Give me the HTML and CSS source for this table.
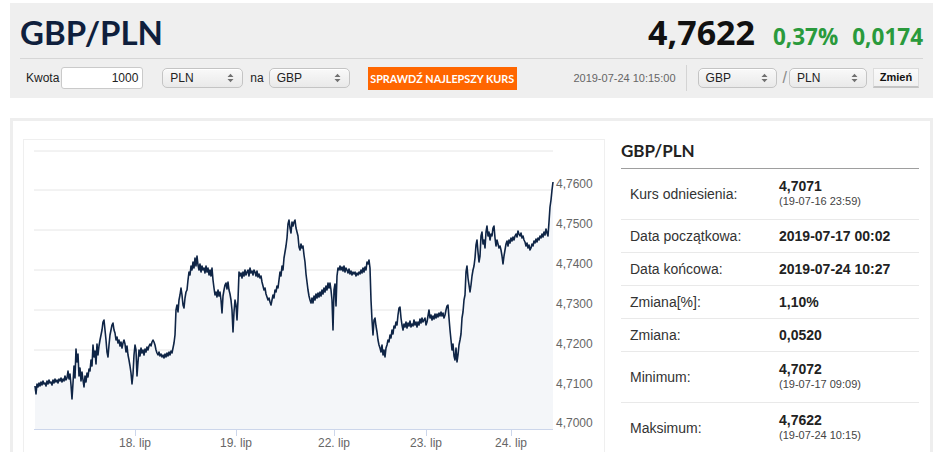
FILE: index.html
```html
<!DOCTYPE html>
<html lang="pl">
<head>
<meta charset="utf-8">
<title>GBP/PLN</title>
<link rel="stylesheet" href="styles.css">
</head>
<body>
<div class="header">
  <div class="title-row">
    <h1 class="pair">GBP/PLN</h1>
    <div class="quote">
      <span class="price">4,7622</span>
      <span class="chg">0,37%</span>
      <span class="chg">0,0174</span>
    </div>
  </div>
  <div class="toolbar">
    <span class="lbl kwota">Kwota</span>
    <div class="input">1000</div>
    <div class="select sel-a"><span>PLN</span><svg class="arr" width="7" height="10" viewBox="0 0 7 10"><path d="M0.5 4 L3.5 0.8 L6.5 4 Z M0.5 6 L3.5 9.2 L6.5 6 Z"/></svg></div>
    <span class="lbl na">na</span>
    <div class="select sel-a"><span>GBP</span><svg class="arr" width="7" height="10" viewBox="0 0 7 10"><path d="M0.5 4 L3.5 0.8 L6.5 4 Z M0.5 6 L3.5 9.2 L6.5 6 Z"/></svg></div>
    <div class="btn-orange">SPRAWDŹ NAJLEPSZY KURS</div>
    <span class="time">2019-07-24 10:15:00</span>
    <span class="vsep"></span>
    <div class="select sel-b"><span>GBP</span><svg class="arr" width="7" height="10" viewBox="0 0 7 10"><path d="M0.5 4 L3.5 0.8 L6.5 4 Z M0.5 6 L3.5 9.2 L6.5 6 Z"/></svg></div>
    <span class="slash">/</span>
    <div class="select sel-c"><span>PLN</span><svg class="arr" width="7" height="10" viewBox="0 0 7 10"><path d="M0.5 4 L3.5 0.8 L6.5 4 Z M0.5 6 L3.5 9.2 L6.5 6 Z"/></svg></div>
    <div class="btn-zmien">Zmień</div>
  </div>
</div>

<div class="card">
  <div class="chart-box">
    <svg class="chart" width="580" height="320" viewBox="24 140 580 320">
      <g class="grid">
        <line x1="34" y1="151" x2="553" y2="151"/>
        <line x1="34" y1="190" x2="553" y2="190"/>
        <line x1="34" y1="230" x2="553" y2="230"/>
        <line x1="34" y1="270" x2="553" y2="270"/>
        <line x1="34" y1="310" x2="553" y2="310"/>
        <line x1="34" y1="350" x2="553" y2="350"/>
        <line x1="34" y1="390" x2="553" y2="390"/>
      </g>
      <path class="area" d="M35,429 L35,386 36,394 37,384 38,387 39,383 40,386 41,382 42,385 43,381 44,384 45,383 46,386 47,381 48,384 49,380 50,383 51,382 52,385 53,380 54,383 55,379 56,382 57,380 58,383 59,379 60,381 61,378 62,382 63,379 64,381 65,376 66,380 67,378 68,371 69,379 70,374 71,385 72,399 73,383 74,366 75,378 76,349 77,362 78,354 79,376 80,368 81,381 82,372 83,380 84,387 85,376 86,382 87,373 88,377 89,369 90,371 91,360 92,366 93,345 94,357 95,351 96,364 97,344 98,355 99,346 100,340 101,335 102,330 103,322 104,320 105,330 106,340 107,352 108,357 109,345 110,335 111,330 112,325 113,323 114,330 115,333 116,340 117,337 118,343 119,340 120,346 121,342 122,348 123,343 124,340 125,344 126,352 127,346 128,355 129,360 130,366 131,373 132,384 133,374 134,355 135,345 136,350 137,376 138,362 139,350 140,356 141,348 142,353 143,350 144,355 145,349 146,352 147,347 148,350 149,346 150,344 151,346 152,342 153,340 154,342 155,345 156,350 157,353 158,355 159,352 160,356 161,354 162,357 163,355 164,358 165,354 166,357 167,353 168,356 169,352 170,355 171,351 172,353 173,348 174,343 175,335 176,310 177,305 178,312 179,300 180,295 181,288 182,295 183,305 184,308 185,298 186,292 187,290 188,280 189,272 190,275 191,266 192,270 193,262 194,268 195,258 196,266 197,256 198,265 199,270 200,264 201,272 202,266 203,270 204,268 205,273 206,266 207,272 208,268 209,275 210,270 211,276 212,268 213,280 214,288 215,295 216,292 217,297 218,290 219,296 220,292 221,300 222,313 223,296 224,290 225,285 226,283 227,289 228,282 229,290 230,294 231,300 232,310 233,332 234,312 235,300 236,305 237,320 238,300 239,272 240,276 241,273 242,278 243,272 244,276 245,270 246,275 247,272 248,270 249,276 250,268 251,273 252,271 253,275 254,270 255,272 256,276 257,271 258,277 259,274 260,278 261,276 262,282 263,286 264,290 265,288 266,294 267,297 268,300 269,298 270,302 271,305 272,300 273,295 274,298 275,290 276,292 277,286 278,288 279,280 280,272 281,276 282,266 283,270 284,258 285,252 286,246 287,238 288,224 289,220 290,228 291,233 292,222 293,226 294,222 295,220 296,228 297,232 298,236 299,247 300,250 301,244 302,248 303,246 304,255 305,262 306,274 307,282 308,290 309,296 310,300 311,303 312,298 313,303 314,296 315,300 316,294 317,298 318,293 319,297 320,292 321,296 322,290 323,294 324,288 325,292 326,286 327,290 328,283 329,288 330,283 331,290 332,300 333,330 334,290 335,284 336,306 337,276 338,268 339,270 340,266 341,270 342,267 343,271 344,266 345,272 346,268 347,270 348,273 349,269 350,274 351,271 352,275 353,272 354,274 355,272 356,276 357,273 358,275 359,272 360,274 361,270 362,273 363,268 364,272 365,267 366,270 367,262 368,264 369,260 370,268 371,300 372,320 373,335 374,320 375,318 376,326 377,332 378,340 379,345 380,348 381,352 382,345 383,355 384,350 385,357 386,348 387,345 388,340 389,342 390,335 391,338 392,330 393,334 394,326 395,328 396,322 397,325 398,315 399,308 400,307 401,318 402,325 403,330 404,324 405,327 406,322 407,328 408,323 409,326 410,321 411,327 412,324 413,326 414,320 415,325 416,322 417,327 418,322 419,325 420,319 421,323 422,318 423,322 424,320 425,318 426,325 427,322 428,316 429,310 430,318 431,315 432,320 433,316 434,319 435,314 436,318 437,314 438,317 439,313 440,316 441,312 442,316 443,313 444,318 445,315 446,310 447,306 448,305 449,318 450,330 451,340 452,350 453,344 454,356 455,360 456,348 457,362 458,355 459,345 460,340 461,334 462,318 463,312 464,300 465,295 466,272 467,266 468,278 469,285 470,292 471,285 472,276 473,270 474,266 475,258 476,245 477,240 478,252 479,262 480,256 481,236 482,232 483,244 484,240 485,248 486,232 487,226 488,236 489,232 490,240 491,234 492,236 493,228 494,226 495,238 496,246 497,240 498,244 499,248 500,246 501,250 502,256 503,264 504,256 505,250 506,244 507,241 508,246 509,240 510,243 511,238 512,241 513,237 514,240 515,236 516,234 517,237 518,231 519,234 520,236 521,233 522,238 523,236 524,240 525,242 526,246 527,243 528,248 529,245 530,250 531,248 532,244 533,246 534,241 535,243 536,239 537,242 538,238 539,240 540,236 541,238 542,234 543,237 544,232 545,235 546,229 547,233 548,236 549,222 550,207 551,200 552,190 553,182 L553,429 Z"/>
      <path class="line" d="M35,386 L36,394 37,384 38,387 39,383 40,386 41,382 42,385 43,381 44,384 45,383 46,386 47,381 48,384 49,380 50,383 51,382 52,385 53,380 54,383 55,379 56,382 57,380 58,383 59,379 60,381 61,378 62,382 63,379 64,381 65,376 66,380 67,378 68,371 69,379 70,374 71,385 72,399 73,383 74,366 75,378 76,349 77,362 78,354 79,376 80,368 81,381 82,372 83,380 84,387 85,376 86,382 87,373 88,377 89,369 90,371 91,360 92,366 93,345 94,357 95,351 96,364 97,344 98,355 99,346 100,340 101,335 102,330 103,322 104,320 105,330 106,340 107,352 108,357 109,345 110,335 111,330 112,325 113,323 114,330 115,333 116,340 117,337 118,343 119,340 120,346 121,342 122,348 123,343 124,340 125,344 126,352 127,346 128,355 129,360 130,366 131,373 132,384 133,374 134,355 135,345 136,350 137,376 138,362 139,350 140,356 141,348 142,353 143,350 144,355 145,349 146,352 147,347 148,350 149,346 150,344 151,346 152,342 153,340 154,342 155,345 156,350 157,353 158,355 159,352 160,356 161,354 162,357 163,355 164,358 165,354 166,357 167,353 168,356 169,352 170,355 171,351 172,353 173,348 174,343 175,335 176,310 177,305 178,312 179,300 180,295 181,288 182,295 183,305 184,308 185,298 186,292 187,290 188,280 189,272 190,275 191,266 192,270 193,262 194,268 195,258 196,266 197,256 198,265 199,270 200,264 201,272 202,266 203,270 204,268 205,273 206,266 207,272 208,268 209,275 210,270 211,276 212,268 213,280 214,288 215,295 216,292 217,297 218,290 219,296 220,292 221,300 222,313 223,296 224,290 225,285 226,283 227,289 228,282 229,290 230,294 231,300 232,310 233,332 234,312 235,300 236,305 237,320 238,300 239,272 240,276 241,273 242,278 243,272 244,276 245,270 246,275 247,272 248,270 249,276 250,268 251,273 252,271 253,275 254,270 255,272 256,276 257,271 258,277 259,274 260,278 261,276 262,282 263,286 264,290 265,288 266,294 267,297 268,300 269,298 270,302 271,305 272,300 273,295 274,298 275,290 276,292 277,286 278,288 279,280 280,272 281,276 282,266 283,270 284,258 285,252 286,246 287,238 288,224 289,220 290,228 291,233 292,222 293,226 294,222 295,220 296,228 297,232 298,236 299,247 300,250 301,244 302,248 303,246 304,255 305,262 306,274 307,282 308,290 309,296 310,300 311,303 312,298 313,303 314,296 315,300 316,294 317,298 318,293 319,297 320,292 321,296 322,290 323,294 324,288 325,292 326,286 327,290 328,283 329,288 330,283 331,290 332,300 333,330 334,290 335,284 336,306 337,276 338,268 339,270 340,266 341,270 342,267 343,271 344,266 345,272 346,268 347,270 348,273 349,269 350,274 351,271 352,275 353,272 354,274 355,272 356,276 357,273 358,275 359,272 360,274 361,270 362,273 363,268 364,272 365,267 366,270 367,262 368,264 369,260 370,268 371,300 372,320 373,335 374,320 375,318 376,326 377,332 378,340 379,345 380,348 381,352 382,345 383,355 384,350 385,357 386,348 387,345 388,340 389,342 390,335 391,338 392,330 393,334 394,326 395,328 396,322 397,325 398,315 399,308 400,307 401,318 402,325 403,330 404,324 405,327 406,322 407,328 408,323 409,326 410,321 411,327 412,324 413,326 414,320 415,325 416,322 417,327 418,322 419,325 420,319 421,323 422,318 423,322 424,320 425,318 426,325 427,322 428,316 429,310 430,318 431,315 432,320 433,316 434,319 435,314 436,318 437,314 438,317 439,313 440,316 441,312 442,316 443,313 444,318 445,315 446,310 447,306 448,305 449,318 450,330 451,340 452,350 453,344 454,356 455,360 456,348 457,362 458,355 459,345 460,340 461,334 462,318 463,312 464,300 465,295 466,272 467,266 468,278 469,285 470,292 471,285 472,276 473,270 474,266 475,258 476,245 477,240 478,252 479,262 480,256 481,236 482,232 483,244 484,240 485,248 486,232 487,226 488,236 489,232 490,240 491,234 492,236 493,228 494,226 495,238 496,246 497,240 498,244 499,248 500,246 501,250 502,256 503,264 504,256 505,250 506,244 507,241 508,246 509,240 510,243 511,238 512,241 513,237 514,240 515,236 516,234 517,237 518,231 519,234 520,236 521,233 522,238 523,236 524,240 525,242 526,246 527,243 528,248 529,245 530,250 531,248 532,244 533,246 534,241 535,243 536,239 537,242 538,238 539,240 540,236 541,238 542,234 543,237 544,232 545,235 546,229 547,233 548,236 549,222 550,207 551,200 552,190 553,182"/>
      <line class="axis" x1="34" y1="429.5" x2="553" y2="429.5"/>
      <g class="ticks">
        <line x1="135.5" y1="430" x2="135.5" y2="436"/>
        <line x1="236.5" y1="430" x2="236.5" y2="436"/>
        <line x1="334.5" y1="430" x2="334.5" y2="436"/>
        <line x1="426.5" y1="430" x2="426.5" y2="436"/>
        <line x1="511.5" y1="430" x2="511.5" y2="436"/>
      </g>
      <g class="ylabels">
        <text x="556" y="188">4,7600</text>
        <text x="556" y="228">4,7500</text>
        <text x="556" y="268">4,7400</text>
        <text x="556" y="308">4,7300</text>
        <text x="556" y="348">4,7200</text>
        <text x="556" y="388">4,7100</text>
        <text x="556" y="427">4,7000</text>
      </g>
      <g class="xlabels">
        <text x="135" y="447">18. lip</text>
        <text x="236" y="447">19. lip</text>
        <text x="334" y="447">22. lip</text>
        <text x="426" y="447">23. lip</text>
        <text x="511" y="447">24. lip</text>
      </g>
    </svg>
  </div>

  <div class="info">
    <h2 class="info-title">GBP/PLN</h2>
    <table class="stats">
      <tr class="dbl"><td class="k">Kurs odniesienia:</td><td class="v"><b>4,7071</b><small>(19-07-16 23:59)</small></td></tr>
      <tr><td class="k">Data początkowa:</td><td class="v"><b>2019-07-17 00:02</b></td></tr>
      <tr><td class="k">Data końcowa:</td><td class="v"><b>2019-07-24 10:27</b></td></tr>
      <tr><td class="k">Zmiana[%]:</td><td class="v"><b>1,10%</b></td></tr>
      <tr><td class="k">Zmiana:</td><td class="v"><b>0,0520</b></td></tr>
      <tr class="dbl"><td class="k">Minimum:</td><td class="v"><b>4,7072</b><small>(19-07-17 09:09)</small></td></tr>
      <tr class="dbl"><td class="k">Maksimum:</td><td class="v"><b>4,7622</b><small>(19-07-24 10:15)</small></td></tr>
    </table>
  </div>
</div>
</body>
</html>
```

FILE: styles.css
```css
* { box-sizing: border-box; }
html, body { margin: 0; padding: 0; background: #fff; }
body {
  font-family: "Liberation Sans", Arial, sans-serif;
  color: #222;
  overflow: hidden;
}

/* ---------- header ---------- */
.header {
  margin: 3px 0 0 10px;
  width: 923px;
  height: 95px;
  background: #efefef;
  padding: 0 10px;
}
.title-row {
  display: flex;
  justify-content: space-between;
  align-items: baseline;
  height: 56px;
  padding-top: 9px;
  border-bottom: 1px solid #d6d6d6;
}
.pair {
  margin: 0;
  font-family: Lato, "Open Sans", sans-serif;
  font-weight: 700;
  font-size: 33px;
  line-height: 40px;
  color: #0f1f3d;
}
.quote {
  display: flex;
  align-items: baseline;
}
.price {
  font-family: "Open Sans", sans-serif;
  font-weight: 700;
  font-size: 34px;
  line-height: 40px;
  color: #111;
  margin-right: 18px;
}
.chg {
  font-family: "Open Sans", sans-serif;
  font-weight: 700;
  font-size: 22.5px;
  color: #2a9a3c;
}
.chg + .chg { margin-left: 14px; }

.toolbar {
  display: flex;
  align-items: center;
  height: 38px;
  font-size: 12px;
}
.lbl { color: #222; font-size: 12px; }
.kwota { margin-left: 6px; }
.input {
  margin-left: 2px;
  width: 82px;
  height: 22px;
  background: #fff;
  border: 1px solid #cacaca;
  border-radius: 3px;
  text-align: right;
  padding-right: 4px;
  line-height: 20px;
  color: #222;
}
.select {
  display: flex;
  align-items: center;
  justify-content: space-between;
  height: 20px;
  padding: 0 8px 0 7px;
  border: 1px solid #c4c4c4;
  border-radius: 5px;
  background: linear-gradient(#f9f9f9, #e9e9e9);
  box-shadow: inset 0 1px 0 #fff;
  color: #222;
  font-size: 12px;
}
.arr { fill: #707070; display: block; }
.sel-a { width: 81px; }
.input + .sel-a { margin-left: 19px; }
.na { margin: 0 5px 0 7px; }
.btn-orange {
  margin-left: 18px;
  width: 149px;
  height: 23px;
  background: #ff6600;
  color: #fff;
  font-family: Lato, "Open Sans", sans-serif;
  font-weight: 700;
  font-size: 10.8px;
  line-height: 23px;
  text-align: center;
  white-space: nowrap;
}
.time {
  margin-left: auto;
  font-size: 11px;
  color: #666;
}
.vsep {
  width: 1px;
  height: 26px;
  background: #d4d4d4;
  margin: 0 11px 0 10px;
}
.sel-b { width: 79px; }
.sel-c { width: 78px; }
.slash {
  font-size: 16px;
  color: #8a8a8a;
  margin: 0 2px 0 6px;
}
.btn-zmien {
  margin: 0 4px 0 6px;
  width: 46px;
  height: 20px;
  background: linear-gradient(#fafafa, #f0f0f0);
  border: 1px solid #dcdcdc;
  border-bottom: 2px solid #c4c4c4;
  font-size: 11px;
  font-weight: 700;
  color: #111;
  text-align: center;
  line-height: 17px;
}

/* ---------- card ---------- */
.card {
  margin: 20px 0 0 10px;
  width: 923px;
  height: 400px;
  border: 3px solid #eeeeee;
  padding: 18px 11px 0 10px;
  display: flex;
  justify-content: space-between;
  align-items: flex-start;
}
.chart-box {
  width: 582px;
  height: 340px;
  border: 1px solid #efefef;
}
.chart { display: block; }
.grid line { stroke: #e6e6e6; stroke-width: 1; }
.axis { stroke: #ccd6eb; stroke-width: 1; }
.ticks line { stroke: #ccd6eb; stroke-width: 1; }
.area { fill: #f4f6f9; stroke: none; }
.line {
  fill: none;
  stroke: #0f2546;
  stroke-width: 1.6;
  stroke-linejoin: round;
}
.ylabels text, .xlabels text {
  font-family: "Liberation Sans", Arial, sans-serif;
  font-size: 12px;
  fill: #666;
}
.xlabels text { text-anchor: middle; }

.info { width: 298px; }
.info-title {
  margin: 0;
  padding-top: 2px;
  height: 30px;
  font-family: Lato, "Open Sans", sans-serif;
  font-weight: 700;
  font-size: 17px;
  line-height: 20px;
  color: #222;
  border-bottom: 1px solid #9e9e9e;
}
.stats {
  width: 100%;
  border-collapse: collapse;
  font-size: 14px;
}
.stats td {
  border-bottom: 1px solid #e9e9e9;
  padding: 8px 0;
  line-height: 16px;
  vertical-align: middle;
}
.stats .k {
  width: 158px;
  padding-left: 9px;
  color: #333;
}
.stats .v b { display: block; color: #222; }
.stats .v small {
  display: block;
  font-size: 11px;
  line-height: 15px;
  color: #444;
}
.stats tr.dbl td { padding-top: 9px; padding-bottom: 10px; }
```
